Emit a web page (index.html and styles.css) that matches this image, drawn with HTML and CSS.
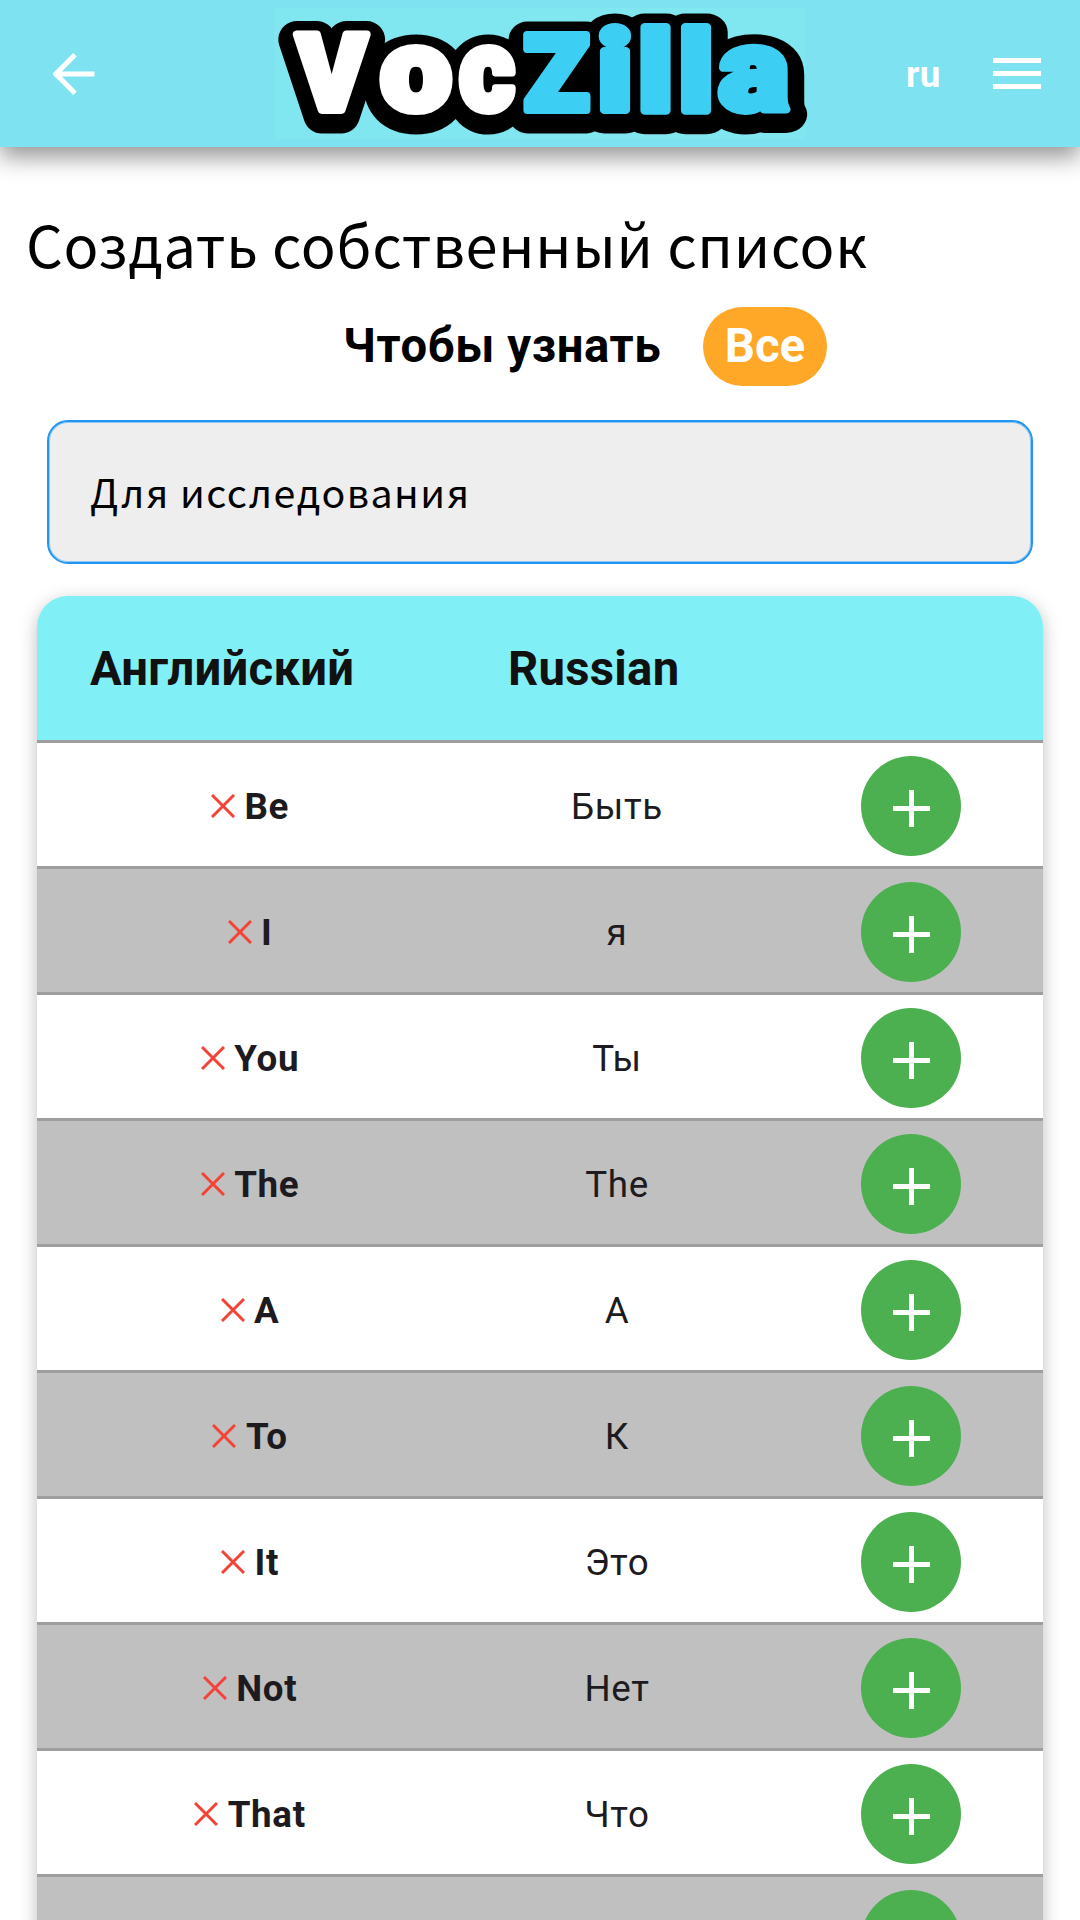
FILE: index.html
```html
<!DOCTYPE html>
<html lang="ru">
<head>
<meta charset="utf-8">
<title>VocZilla</title>
<link rel="stylesheet" href="styles.css">
</head>
<body>
<header class="appbar">
  <svg class="back" viewBox="0 0 42 42" fill="none" stroke="#fff" stroke-width="5"><path d="M41.5 21H3M22 1.8 2.8 21 22 40.2"/></svg>
  <svg class="logo" viewBox="0 0 532 131" role="img" aria-label="VocZilla">
    <rect class="logo-bg" width="532" height="131"/>
    <rect x="125" y="55" width="360" height="50"/>
    <defs>
      <g id="word" class="word">
        <text class="cap" x="23" y="102">V</text>
        <text class="low" x="106.5" y="102" textLength="71" lengthAdjust="spacingAndGlyphs">o</text>
        <text class="low" x="185.5" y="102" textLength="55" lengthAdjust="spacingAndGlyphs">c</text>
        <text class="blue cap" x="250" y="102" textLength="65" lengthAdjust="spacingAndGlyphs">Z</text>
        <text class="blue tall" x="323.5" y="102" textLength="35" lengthAdjust="spacingAndGlyphs">i</text>
        <text class="blue tall" x="364" y="102" textLength="35" lengthAdjust="spacingAndGlyphs">l</text>
        <text class="blue tall" x="404.5" y="102" textLength="35" lengthAdjust="spacingAndGlyphs">l</text>
        <text class="blue low" x="445" y="102" textLength="70" lengthAdjust="spacingAndGlyphs">a</text>
      </g>
    </defs>
    <use class="outline" href="#word" y="5"/>
    <use class="face" href="#word"/>
  </svg>
  <span class="lang">ru</span>
  <svg class="menu" viewBox="0 0 48 32" fill="#fff"><path d="M0 0h48v5H0zM0 13h48v5H0zM0 26h48v5H0z"/></svg>
</header>
<main class="page">
  <h1 class="title">Создать собственный список</h1>
  <div class="filter"><span class="filter-label">Чтобы узнать</span><span class="pill">Все</span></div>
  <div class="search"><span class="search-text">Для исследования</span></div>
  <section class="table">
    <div class="head"><span class="head-en">Английский</span><span class="head-ru">Russian</span></div>
    <div class="row"><div class="en"><svg class="x" viewBox="0 0 24 24"><path d="M1 1l22 22M23 1 1 23"/></svg><b>Be</b></div><div class="ru">Быть</div><div class="act"><span class="add"><svg class="plus" viewBox="0 0 37 37"><path d="M0 18.5h37M18.5 0v37"/></svg></span></div></div>
    <div class="row"><div class="en"><svg class="x" viewBox="0 0 24 24"><path d="M1 1l22 22M23 1 1 23"/></svg><b>I</b></div><div class="ru">я</div><div class="act"><span class="add"><svg class="plus" viewBox="0 0 37 37"><path d="M0 18.5h37M18.5 0v37"/></svg></span></div></div>
    <div class="row"><div class="en"><svg class="x" viewBox="0 0 24 24"><path d="M1 1l22 22M23 1 1 23"/></svg><b>You</b></div><div class="ru">Ты</div><div class="act"><span class="add"><svg class="plus" viewBox="0 0 37 37"><path d="M0 18.5h37M18.5 0v37"/></svg></span></div></div>
    <div class="row"><div class="en"><svg class="x" viewBox="0 0 24 24"><path d="M1 1l22 22M23 1 1 23"/></svg><b>The</b></div><div class="ru">The</div><div class="act"><span class="add"><svg class="plus" viewBox="0 0 37 37"><path d="M0 18.5h37M18.5 0v37"/></svg></span></div></div>
    <div class="row"><div class="en"><svg class="x" viewBox="0 0 24 24"><path d="M1 1l22 22M23 1 1 23"/></svg><b>A</b></div><div class="ru">А</div><div class="act"><span class="add"><svg class="plus" viewBox="0 0 37 37"><path d="M0 18.5h37M18.5 0v37"/></svg></span></div></div>
    <div class="row"><div class="en"><svg class="x" viewBox="0 0 24 24"><path d="M1 1l22 22M23 1 1 23"/></svg><b>To</b></div><div class="ru">К</div><div class="act"><span class="add"><svg class="plus" viewBox="0 0 37 37"><path d="M0 18.5h37M18.5 0v37"/></svg></span></div></div>
    <div class="row"><div class="en"><svg class="x" viewBox="0 0 24 24"><path d="M1 1l22 22M23 1 1 23"/></svg><b>It</b></div><div class="ru">Это</div><div class="act"><span class="add"><svg class="plus" viewBox="0 0 37 37"><path d="M0 18.5h37M18.5 0v37"/></svg></span></div></div>
    <div class="row"><div class="en"><svg class="x" viewBox="0 0 24 24"><path d="M1 1l22 22M23 1 1 23"/></svg><b>Not</b></div><div class="ru">Нет</div><div class="act"><span class="add"><svg class="plus" viewBox="0 0 37 37"><path d="M0 18.5h37M18.5 0v37"/></svg></span></div></div>
    <div class="row"><div class="en"><svg class="x" viewBox="0 0 24 24"><path d="M1 1l22 22M23 1 1 23"/></svg><b>That</b></div><div class="ru">Что</div><div class="act"><span class="add"><svg class="plus" viewBox="0 0 37 37"><path d="M0 18.5h37M18.5 0v37"/></svg></span></div></div>
    <div class="row"><div class="en"></div><div class="ru"></div><div class="act"><span class="add"></span></div></div>
  </section>
</main>
</body>
</html>
```
FILE: styles.css
```css
* { box-sizing: border-box; }
body {
  margin: 0;
  height: 1920px;
  overflow: hidden;
  background: #fff;
  color: #1d1b20;
  font-family: Roboto, "Liberation Sans", sans-serif;
}
svg { display: block; flex: none; }

.appbar {
  display: flex;
  align-items: center;
  height: 147px;
  padding: 0 39px 0 53px;
  background: #7ee2f0;
  box-shadow: 0 10px 22px rgba(0, 0, 0, .42);
}
.back { width: 42px; height: 42px; }
.logo { width: 532px; height: 131px; margin-left: 179px; overflow: visible; }
.logo-bg { fill: #80e7f1; }
.word { font-family: Roboto, sans-serif; font-weight: 900; }
.cap { font-size: 105px; }
.low { font-size: 115px; }
.tall { font-size: 111px; }
.blue { fill: var(--accent); stroke: var(--accent); }
.outline { --accent: #000; fill: #000; stroke: #000; stroke-width: 37px; stroke-linejoin: round; }
.face { --accent: #3dcff3; fill: #fff; stroke: #fff; stroke-width: 8px; stroke-linejoin: round; }
.lang { width: 87px; margin-left: 100px; padding-top: 2px; color: #fff; font-size: 36.75px; font-weight: 700; letter-spacing: .4px; }
.menu { width: 48px; height: 32px; }

.page { display: flex; flex-direction: column; }
.title {
  margin: 54px 0 0 26px;
  height: 84px;
  line-height: 84px;
  color: #000;
  font-family: "Noto Sans CJK JP", sans-serif;
  font-size: 57.75px;
  font-weight: 400;
  letter-spacing: .68px;
  white-space: nowrap;
}
.filter { display: flex; align-items: center; height: 79px; margin: 22px 0 0 343px; font-size: 47.25px; font-weight: 700; color: #000; }
.filter-label { width: 360px; padding-bottom: 2px; letter-spacing: .62px; white-space: nowrap; }
.pill { display: flex; align-items: center; justify-content: center; width: 124px; height: 79px; padding-bottom: 2px; border-radius: 40px; background: #ffa726; color: #fff; }
.search {
  display: flex;
  align-items: center;
  height: 144px;
  margin: 34px 47px 0;
  padding: 0 0 4px 41px;
  border: 2px solid #2196f3;
  border-radius: 21px;
  box-shadow: inset 0 0 0 1px #90c8f3;
  background: #eee;
  color: #000;
  font-family: "Noto Sans CJK JP", sans-serif;
  font-size: 39.375px;
  letter-spacing: 1.4px;
}

.table {
  margin: 32px 37px 0;
  border-radius: 31px 31px 0 0;
  box-shadow: 0 5px 18px rgba(0, 0, 0, .26);
}
.head {
  display: flex;
  align-items: center;
  height: 144px;
  padding: 2px 0 0 53px;
  border-radius: 31px 31px 0 0;
  background: #80eff6;
  color: #111;
  font-size: 47.25px;
  font-weight: 700;
  letter-spacing: .26px;
}
.head-en { width: 418px; }
.row {
  display: grid;
  grid-template-columns: 424px 318px 1fr;
  align-items: center;
  height: 126px;
  padding-top: 3px;
  border-top: 3px solid #9e9e9e;
  background: #fff;
  font-size: 36.75px;
  letter-spacing: .66px;
}
.row:nth-child(odd) { background: #c0c0c0; }
.en { display: flex; align-items: center; justify-content: center; gap: 9.5px; padding-left: 2px; }
.x { width: 24px; height: 24px; fill: none; stroke: #f44336; stroke-width: 3; }
.ru { padding-right: 6px; text-align: center; }
.act { display: flex; justify-content: center; }
.add { display: flex; align-items: center; justify-content: center; width: 100px; height: 100px; padding-top: 5px; border-radius: 50%; background: #4caf50; }
.plus { width: 37px; height: 37px; stroke: #fff; stroke-width: 5; }
```
